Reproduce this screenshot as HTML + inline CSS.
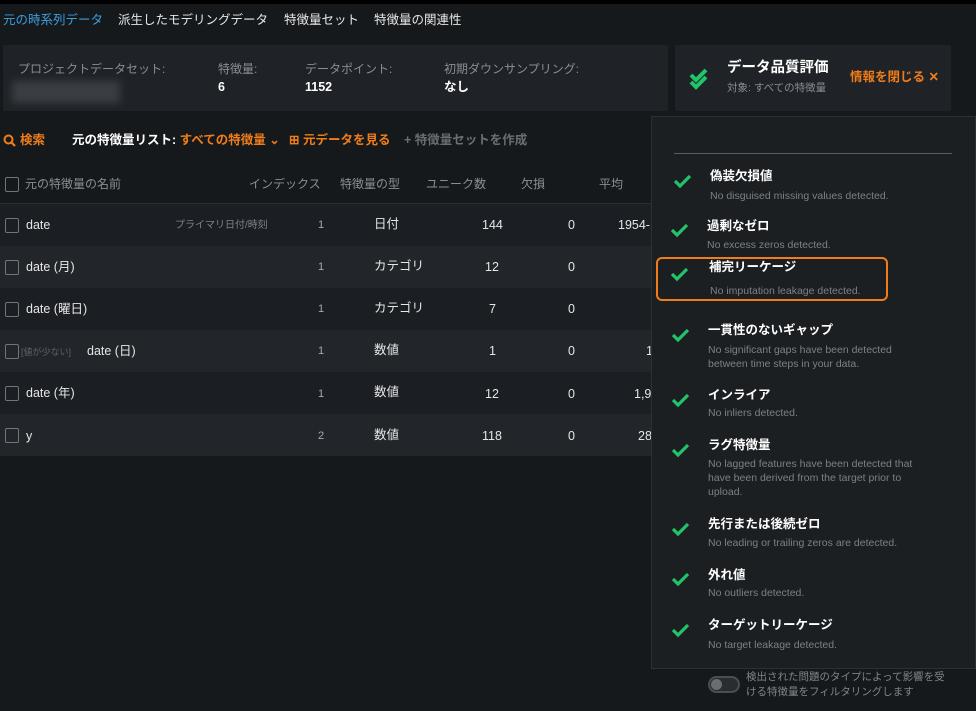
<!DOCTYPE html><html><head><meta charset="utf-8"><style>
*{margin:0;padding:0;box-sizing:border-box}
body{width:976px;height:711px;background:#16191c;font-family:"Liberation Sans","Noto Sans CJK JP",sans-serif;color:#e6e6e6;position:relative;overflow:hidden;font-size:12.5px}
.a{position:absolute;white-space:nowrap;line-height:16px}
.top{position:absolute;left:0;top:0;width:976px;height:4px;background:#000}
.panel{position:absolute;background:#1f2327;border-radius:2px}
.lbl{color:#8a8e92;font-size:12px}
.val{font-weight:bold;font-size:12.5px;color:#fff}
.org{color:#f07d1a;font-weight:bold}
.row{position:absolute;left:0;width:660px;height:42px}
.cb{position:absolute;left:5px;width:14px;height:15px;border:1px solid #70757a;border-radius:2px}
.pop{position:absolute;left:651px;top:116px;width:325px;height:553px;background:#1c1f22;border:1px solid #2c3034}
.chk{position:absolute;width:20px;height:16px}
.t{font-weight:bold;font-size:12.5px;color:#fff}
.d{color:#7c8084;font-size:10.5px;line-height:14px}
.ix{font-size:11px;color:#aaa}
</style></head><body>
<div class="top"></div>
<div class="a" style="left:3px;top:12px;color:#3c9ee0">元の時系列データ</div>
<div class="a" style="left:118px;top:12px">派生したモデリングデータ</div>
<div class="a" style="left:284px;top:12px">特徴量セット</div>
<div class="a" style="left:374px;top:12px">特徴量の関連性</div>
<div class="panel" style="left:3px;top:45px;width:665px;height:66px"></div>
<div class="a lbl" style="left:18px;top:61px">プロジェクトデータセット:</div>
<div class="a" style="left:12px;top:81px;width:108px;height:22px;background:#3a3e42;filter:blur(4px)"></div>
<div class="a lbl" style="left:218px;top:61px">特徴量:</div><div class="a val" style="left:218px;top:79px">6</div>
<div class="a lbl" style="left:305px;top:61px">データポイント:</div><div class="a val" style="left:305px;top:79px">1152</div>
<div class="a lbl" style="left:444px;top:61px">初期ダウンサンプリング:</div><div class="a val" style="left:444px;top:79px">なし</div>
<div class="panel" style="left:675px;top:45px;width:276px;height:66px"></div>
<svg class="a" style="left:688px;top:66px" width="26" height="24" viewBox="0 0 26 24"><path d="M3 9l5 5 10-10M3 16l5 5 10-10" stroke="#22c46a" stroke-width="4" fill="none"/></svg>
<div class="a" style="left:727px;top:60px;font-weight:bold;font-size:14.5px;color:#fff">データ品質評価</div>
<div class="a" style="left:727px;top:80px;font-size:10.5px;color:#8a8e92">対象: すべての特徴量</div>
<div class="a org" style="left:850px;top:69px;font-size:12.5px">情報を閉じる ✕</div>
<svg class="a" style="left:3px;top:134px" width="13" height="13" viewBox="0 0 13 13"><circle cx="5.5" cy="5.5" r="4" stroke="#f07d1a" stroke-width="2" fill="none"/><path d="M8.5 8.5l3.5 3.5" stroke="#f07d1a" stroke-width="2.2"/></svg>
<div class="a org" style="left:20px;top:132px;font-size:12.5px">検索</div>
<div class="a" style="left:72px;top:132px;font-weight:bold;font-size:12.5px;color:#fff">元の特徴量リスト: <span class="org">すべての特徴量 ⌄</span></div>
<div class="a org" style="left:289px;top:132px;font-size:12.5px">⊞ 元データを見る</div>
<div class="a" style="left:404px;top:132px;font-weight:bold;font-size:12.5px;color:#6a6e72">+ 特徴量セットを作成</div>
<div class="cb" style="top:177px"></div>
<div class="a lbl" style="left:25px;top:176px">元の特徴量の名前</div>
<div class="a lbl" style="left:249px;top:176px">インデックス</div>
<div class="a lbl" style="left:340px;top:176px">特徴量の型</div>
<div class="a lbl" style="left:426px;top:176px">ユニーク数</div>
<div class="a lbl" style="left:521px;top:176px">欠損</div>
<div class="a lbl" style="left:599px;top:176px">平均</div>
<div class="a" style="left:0;top:203px;width:660px;height:1px;background:#2a2e32"></div>

<div class="row" style="top:204px;background:#1b1e22"></div>
<div class="row" style="top:246px;background:#22262a"></div>
<div class="row" style="top:288px;background:#1b1e22"></div>
<div class="row" style="top:330px;background:#22262a"></div>
<div class="row" style="top:372px;background:#1b1e22"></div>
<div class="row" style="top:414px;background:#22262a"></div>

<div class="cb" style="top:218px"></div><div class="a" style="left:26px;top:217px">date</div><div class="a" style="left:175px;top:218px;font-size:10px;color:#80848a">プライマリ日付/時刻</div>
<div class="cb" style="top:260px"></div><div class="a" style="left:26px;top:259px">date (月)</div>
<div class="cb" style="top:302px"></div><div class="a" style="left:26px;top:301px">date (曜日)</div>
<div class="cb" style="top:344px"></div><div class="a" style="left:21px;top:344px;font-size:9px;color:#60646a">[値が少ない]</div><div class="a" style="left:87px;top:343px">date (日)</div>
<div class="cb" style="top:386px"></div><div class="a" style="left:26px;top:385px">date (年)</div>
<div class="cb" style="top:428px"></div><div class="a" style="left:26px;top:428px">y</div>

<div class="a ix" style="left:318px;top:217px">1</div><div class="a" style="left:374px;top:216px">日付</div><div class="a" style="left:482px;top:217px">144</div><div class="a" style="left:568px;top:217px">0</div><div class="a" style="left:618px;top:217px">1954-1</div>
<div class="a ix" style="left:318px;top:259px">1</div><div class="a" style="left:374px;top:258px">カテゴリ</div><div class="a" style="left:485px;top:259px">12</div><div class="a" style="left:568px;top:259px">0</div>
<div class="a ix" style="left:318px;top:301px">1</div><div class="a" style="left:374px;top:300px">カテゴリ</div><div class="a" style="left:489px;top:301px">7</div><div class="a" style="left:568px;top:301px">0</div>
<div class="a ix" style="left:318px;top:343px">1</div><div class="a" style="left:374px;top:342px">数値</div><div class="a" style="left:489px;top:343px">1</div><div class="a" style="left:568px;top:343px">0</div><div class="a" style="left:646px;top:343px">1</div>
<div class="a ix" style="left:318px;top:386px">1</div><div class="a" style="left:374px;top:384px">数値</div><div class="a" style="left:485px;top:386px">12</div><div class="a" style="left:568px;top:386px">0</div><div class="a" style="left:634px;top:386px">1,9</div>
<div class="a ix" style="left:318px;top:428px">2</div><div class="a" style="left:374px;top:427px">数値</div><div class="a" style="left:482px;top:428px">118</div><div class="a" style="left:568px;top:428px">0</div><div class="a" style="left:638px;top:428px">28</div>

<div class="pop"></div>
<div class="a" style="left:674px;top:153px;width:278px;height:1px;background:#5a5e62"></div>
<div class="a" style="left:656px;top:257px;width:232px;height:44px;border:2px solid #f07d1a;border-radius:6px"></div>

<svg width="0" height="0" style="position:absolute"><defs><path id="c" d="M2 8l5 5 10-10" stroke="#22c46a" stroke-width="3.2" fill="none"/></defs></svg>
<svg class="chk" style="left:673px;top:173px"><use href="#c"/></svg>
<div class="a t" style="left:710px;top:168px">偽装欠損値</div><div class="a d" style="left:710px;top:189px">No disguised missing values detected.</div>
<svg class="chk" style="left:670px;top:222px"><use href="#c"/></svg>
<div class="a t" style="left:707px;top:218px">過剰なゼロ</div><div class="a d" style="left:707px;top:238px">No excess zeros detected.</div>
<svg class="chk" style="left:670px;top:266px"><use href="#c"/></svg>
<div class="a t" style="left:709px;top:259px">補完リーケージ</div><div class="a d" style="left:710px;top:284px">No imputation leakage detected.</div>
<svg class="chk" style="left:671px;top:327px"><use href="#c"/></svg>
<div class="a t" style="left:708px;top:322px">一貫性のないギャップ</div><div class="a d" style="left:708px;top:343px">No significant gaps have been detected<br>between time steps in your data.</div>
<svg class="chk" style="left:671px;top:392px"><use href="#c"/></svg>
<div class="a t" style="left:708px;top:387px">インライア</div><div class="a d" style="left:708px;top:406px">No inliers detected.</div>
<svg class="chk" style="left:671px;top:442px"><use href="#c"/></svg>
<div class="a t" style="left:708px;top:437px">ラグ特徴量</div><div class="a d" style="left:708px;top:457px">No lagged features have been detected that<br>have been derived from the target prior to<br>upload.</div>
<svg class="chk" style="left:671px;top:521px"><use href="#c"/></svg>
<div class="a t" style="left:708px;top:516px">先行または後続ゼロ</div><div class="a d" style="left:708px;top:536px">No leading or trailing zeros are detected.</div>
<svg class="chk" style="left:671px;top:571px"><use href="#c"/></svg>
<div class="a t" style="left:708px;top:567px">外れ値</div><div class="a d" style="left:708px;top:586px">No outliers detected.</div>
<svg class="chk" style="left:671px;top:622px"><use href="#c"/></svg>
<div class="a t" style="left:708px;top:617px">ターゲットリーケージ</div><div class="a d" style="left:708px;top:638px">No target leakage detected.</div>

<div class="a" style="left:708px;top:676px;width:32px;height:17px;border:2px solid #4a4e52;border-radius:9px;background:#2a2d30"><div style="position:absolute;left:1px;top:1px;width:11px;height:11px;border-radius:50%;background:#6a6e72"></div></div>
<div class="a" style="left:746px;top:670px;font-size:10.5px;line-height:15px;color:#80848a">検出された問題のタイプによって影響を受<br>ける特徴量をフィルタリングします</div>
</body></html>
